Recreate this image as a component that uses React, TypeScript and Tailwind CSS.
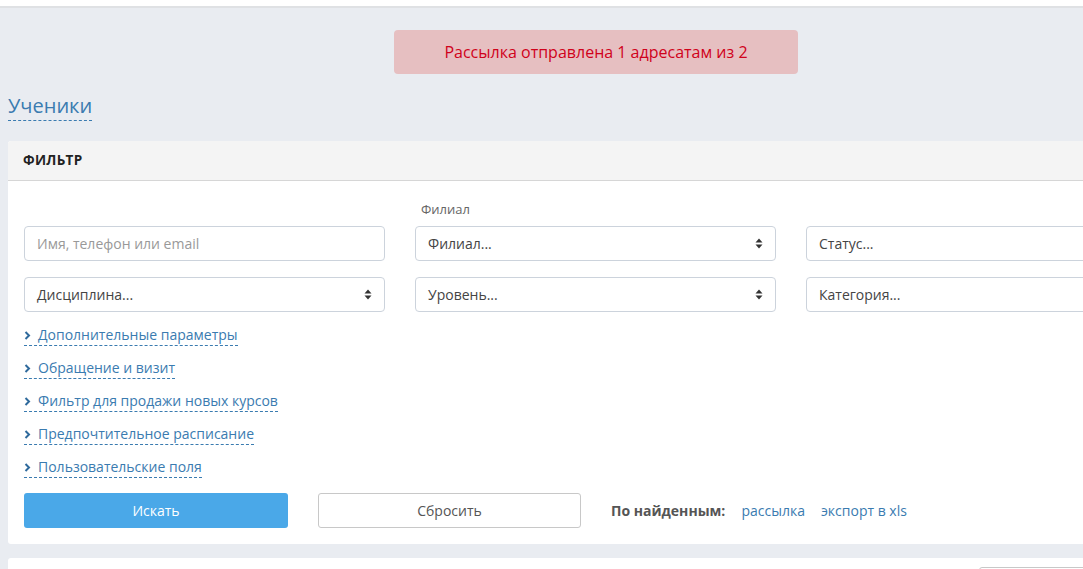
import React from 'react';

const links = [
  'Дополнительные параметры',
  'Обращение и визит',
  'Фильтр для продажи новых курсов',
  'Предпочтительное расписание',
  'Пользовательские поля',
];

function SelectArrows() {
  return (
    <svg width="8" height="11" viewBox="0 0 8 11" className="text-[#333]">
      <path d="M4 0.5 L7.5 4.5 H0.5 Z" fill="currentColor" />
      <path d="M4 10.5 L7.5 6.5 H0.5 Z" fill="currentColor" />
    </svg>
  );
}

function Field({ text, select, placeholder }: { text: string; select?: boolean; placeholder?: boolean }) {
  return (
    <div className="w-[361px] h-[35px] shrink-0 bg-white border border-[#ccd3dc] rounded-[4px] flex items-center justify-between px-3">
      <span className={placeholder ? 'text-[14px] text-[#999]' : 'text-[14px] text-[#444]'}>{text}</span>
      {select && <SelectArrows />}
    </div>
  );
}

function Chevron() {
  return (
    <svg width="7" height="9" viewBox="0 0 7 9" className="text-[#2f6a9c]">
      <path d="M1.5 1 L5 4.5 L1.5 8" stroke="currentColor" strokeWidth="2" fill="none" />
    </svg>
  );
}

export default function App() {
  return (
    <div className="w-[1083px] h-[569px] overflow-hidden bg-[#e9ecf1] font-['Open_Sans',sans-serif]">
      <div className="h-[6px] bg-white border-b-2 border-[#dfe1e4] box-content" />
      <div className="flex pt-[22px] pl-[394px]">
        <div className="w-[404px] h-[44px] rounded-[4px] bg-[#e6bfc1] flex items-center justify-center text-[16px] text-[#d0021b]">
          Рассылка отправлена 1 адресатам из 2
        </div>
      </div>
      <div className="pl-2 pt-[19px]">
        <span className="text-[20px] leading-[26px] text-[#3a7bb0] border-b border-dashed border-[#3a7bb0] inline-block pb-[1px]">
          Ученики
        </span>
      </div>
      <div className="ml-2 mt-[20px] w-[1200px] bg-white rounded-[3px] overflow-hidden">
        <div className="h-[40px] bg-[#f4f4f4] border-b border-[#d6d6d6] flex items-center pl-[15px]">
          <span className="text-[13.5px] font-bold text-[#222] tracking-[0.3px]">ФИЛЬТР</span>
        </div>
        <div className="px-4 pt-[19px] pb-4">
          <div className="flex gap-[30px]">
            <div className="w-[361px]" />
            <div className="w-[361px] pl-[6px] text-[13px] text-[#666] leading-[18px]">Филиал</div>
          </div>
          <div className="mt-[8px] flex gap-[30px]">
            <Field text="Имя, телефон или email" placeholder />
            <Field text="Филиал..." select />
            <Field text="Статус..." />
          </div>
          <div className="mt-[16px] flex gap-[30px]">
            <Field text="Дисциплина..." select />
            <Field text="Уровень..." select />
            <Field text="Категория..." />
          </div>
          <div className="mt-[13px] flex flex-col gap-[12px] items-start">
            {links.map((l) => (
              <div key={l} className="flex items-center gap-[7px] border-b border-dashed border-[#3a7bb0] leading-[20px] text-[14px] text-[#3a7bb0]">
                <Chevron />
                <span>{l}</span>
              </div>
            ))}
          </div>
          <div className="mt-[15px] flex items-center">
            <button className="w-[264px] h-[35px] rounded-[3px] bg-[#4aa8e8] text-white text-[14px]">Искать</button>
            <button className="ml-[30px] w-[263px] h-[35px] rounded-[3px] bg-white border border-[#c8c8c8] text-[#555] text-[14px]">
              Сбросить
            </button>
            <span className="ml-[30px] text-[14px] font-bold text-[#555]">По найденным:</span>
            <span className="ml-[16px] text-[14px] text-[#3a7bb0]">рассылка</span>
            <span className="ml-[16px] text-[14px] text-[#3a7bb0]">экспорт в xls</span>
          </div>
        </div>
      </div>
      <div className="ml-2 mt-[14px] w-[1200px] h-[40px] bg-white rounded-[3px] pt-[9px] pl-[971px]">
        <div className="w-[120px] h-[30px] border border-[#c8c8c8] rounded-[3px]" />
      </div>
    </div>
  );
}
